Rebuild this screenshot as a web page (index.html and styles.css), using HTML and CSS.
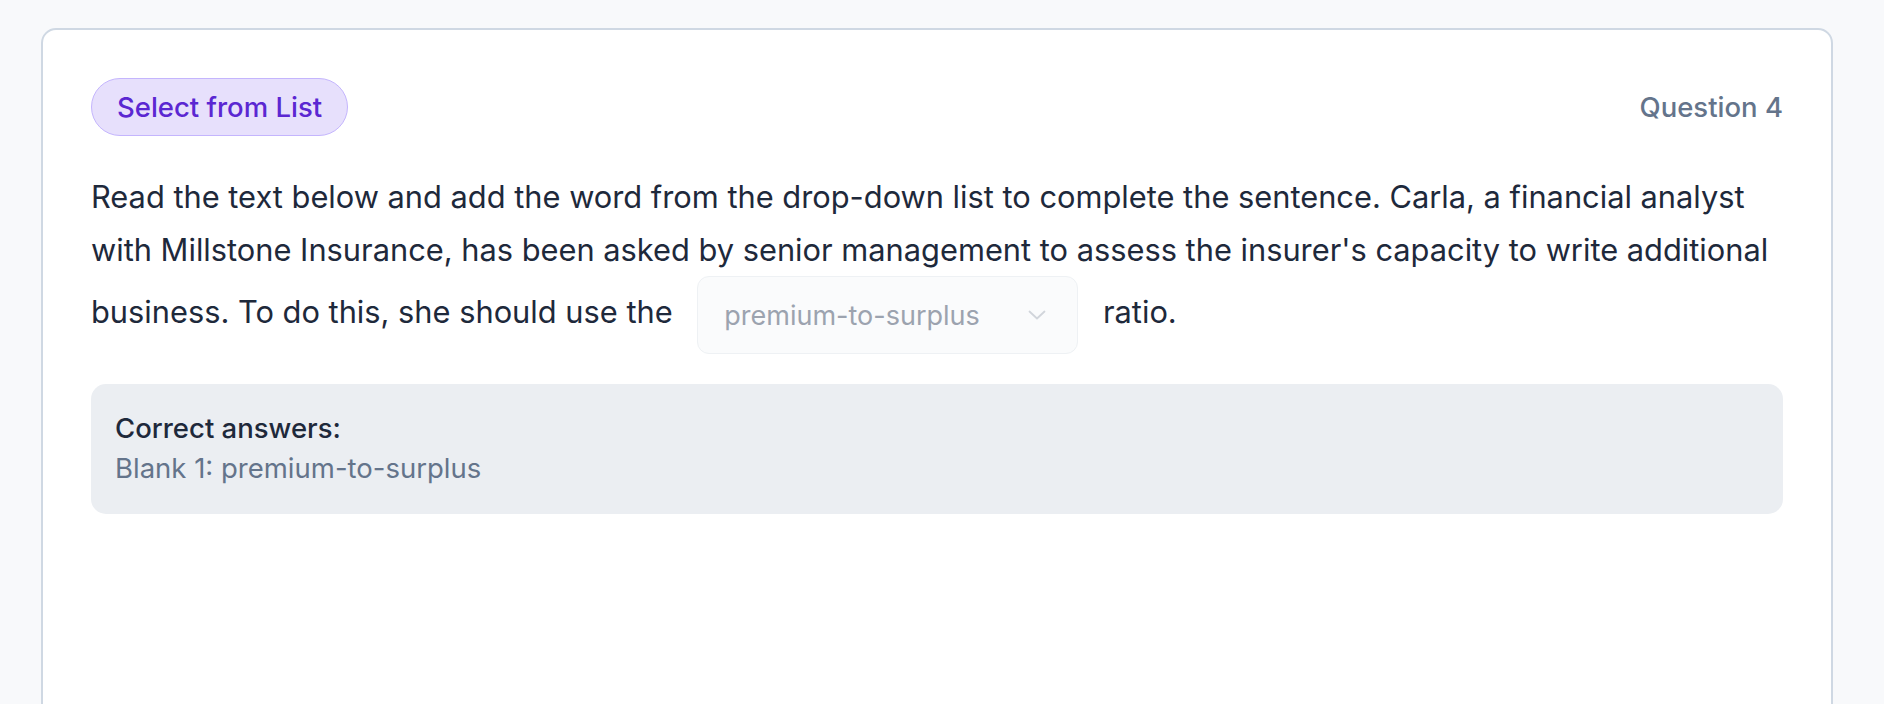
FILE: index.html
```html
<!DOCTYPE html>
<html lang="en">
<head>
<meta charset="utf-8">
<title>Question 4</title>
<link rel="stylesheet" href="styles.css">
</head>
<body>
<main class="page">
  <section class="card">
    <header class="card-head">
      <span class="badge">Select from List</span>
      <span class="qnum">Question 4</span>
    </header>
    <p class="prompt">Read the text below and add the word from the drop-down list to complete the sentence. Carla, a financial analyst with Millstone Insurance, has been asked by senior management to assess the insurer's capacity to write additional business. To do this, she should use the <span class="select"><span class="select-value">premium-to-surplus</span><svg class="chev" width="18" height="10" viewBox="0 0 18 10" fill="none"><path d="M1.5 1.5 L9 8.5 L16.5 1.5" stroke="#d1d5db" stroke-width="1.8" stroke-linecap="round" stroke-linejoin="round"/></svg></span> ratio.</p>
    <div class="answers">
      <div class="answers-title">Correct answers:</div>
      <div class="answers-item">Blank 1: premium-to-surplus</div>
    </div>
  </section>
</main>
</body>
</html>
```

FILE: styles.css
```css
* { box-sizing: border-box; }
html, body { margin: 0; padding: 0; }
body {
  background: #f8f9fb;
  font-family: Inter, "Noto Sans", "Liberation Sans", sans-serif;
  color: #1e293b;
}
.page {
  padding: 28px 51px 0 41px;
}
.card {
  background: #ffffff;
  border: 2px solid #cfd8e3;
  border-radius: 15px;
  padding: 48px 48px 0 48px;
  min-height: 760px;
}
.card-head {
  display: flex;
  justify-content: space-between;
  align-items: center;
}
.badge {
  display: inline-flex;
  align-items: center;
  height: 58px;
  padding: 0 25px;
  border-radius: 999px;
  background: #e7e0fc;
  border: 1.5px solid #c4b5fd;
  color: #5b27d2;
  font-size: 27.5px;
  font-weight: 500;
}
.qnum {
  color: #64748b;
  font-size: 27.5px;
  font-weight: 500;
}
.prompt {
  margin: 34px 0 0 0;
  font-size: 30.8px;
  line-height: 53px;
  color: #1e293b;
}
.select {
  display: inline-flex;
  align-items: center;
  justify-content: space-between;
  width: 381px;
  height: 78px;
  margin: 0 16px;
  padding: 0 31px 0 26px;
  vertical-align: middle;
  background: #fafbfc;
  border: 1.5px solid #eef1f4;
  border-radius: 12px;
  color: #9ca3af;
  font-size: 27px;
  line-height: 1;
}
.chev { display: block; }
.answers {
  margin-top: 30px;
  background: #ebeef2;
  border-radius: 15px;
  padding: 24px 24px 26px;
  font-size: 27.5px;
  line-height: 40px;
}
.answers-title {
  color: #1e293b;
  font-weight: 500;
}
.answers-item {
  color: #64748b;
}
```
